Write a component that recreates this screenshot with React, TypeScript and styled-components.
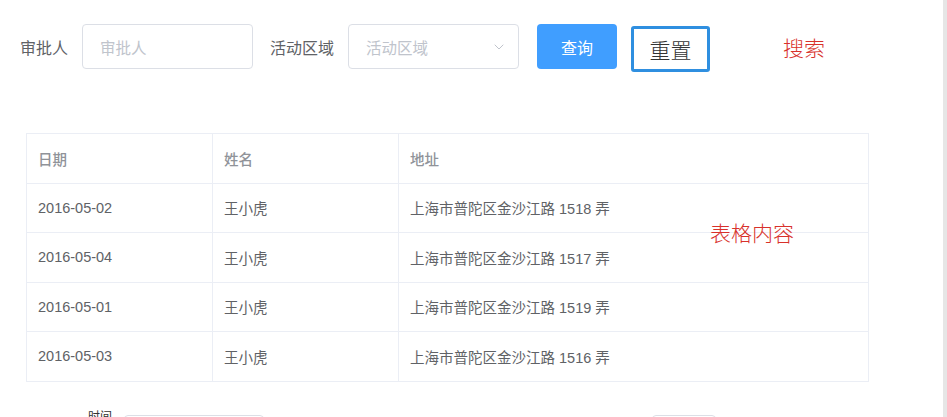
import React from "react";
import styled, { createGlobalStyle } from "styled-components";
import { ChevronDown } from "lucide-react";

const GlobalStyle = createGlobalStyle`
  html, body {
    margin: 0;
    padding: 0;
    background: #fff;
    overflow: hidden;
  }
  body {
    font-family: "Liberation Sans", "Noto Sans CJK SC", sans-serif;
  }
`;

const Page = styled.div`
  display: flex;
  width: 947px;
  height: 417px;
  overflow: hidden;
`;

const Main = styled.div`
  flex: 1;
  display: flex;
  flex-direction: column;
`;

const Gutter = styled.div`
  width: 4px;
  background: #e6e6e6;
`;

const Toolbar = styled.div`
  display: flex;
  align-items: center;
  padding: 24px 0 0 20px;
  height: 45px;
`;

const Label = styled.label`
  font-size: 16px;
  color: #606266;
  margin-right: 14px;
  white-space: nowrap;
`;

const Field = styled.div<{ $width: number; $gap: number }>`
  position: relative;
  display: flex;
  align-items: center;
  box-sizing: border-box;
  width: ${(p) => p.$width}px;
  height: 45px;
  border: 1px solid #dcdfe6;
  border-radius: 4px;
  padding: 0 17px;
  margin-right: ${(p) => p.$gap}px;
  color: #c0c4cc;
  font-size: 15.5px;
`;

const Placeholder = styled.span`
  flex: 1;
  color: #c0c4cc;
`;

const Arrow = styled.span`
  display: flex;
  color: #c0c4cc;
  margin-right: -6px;
`;

const PrimaryButton = styled.button`
  width: 80px;
  height: 45px;
  border: none;
  border-radius: 4px;
  background: #409eff;
  color: #fff;
  font-family: "Liberation Sans", "Noto Sans CJK SC", sans-serif;
  font-size: 16px;
  margin-right: 14px;
  padding: 0;
`;

const PlainButton = styled.button`
  width: 79px;
  height: 46px;
  margin-top: 4px;
  box-sizing: border-box;
  border: 3px solid #2f8fe0;
  border-radius: 3px;
  background: #fff;
  color: #333;
  font-family: "Noto Sans CJK SC", sans-serif;
  font-weight: 300;
  font-size: 21px;
  padding: 0;
`;

const Note = styled.span`
  color: #d8312b;
  font-family: "Noto Sans CJK SC", sans-serif;
  font-weight: 300;
  font-size: 21px;
  white-space: nowrap;
`;

const SearchNote = styled(Note)`
  margin-left: 73px;
`;

const TableWrap = styled.div`
  position: relative;
  margin: 64px 0 0 26px;
  width: 843px;
`;

const TableNote = styled(Note)`
  position: absolute;
  left: 684px;
  top: 84px;
`;

const Table = styled.table`
  width: 100%;
  border-collapse: collapse;
  table-layout: fixed;
  border: 1px solid #f0f1f4;
`;

const HeadCell = styled.th<{ $width?: number }>`
  width: ${(p) => (p.$width ? `${p.$width}px` : "auto")};
  height: 48.5px;
  padding: 0 0 0 11px;
  text-align: left;
  font-size: 14.5px;
  font-weight: 500;
  color: #909399;
  border: 1px solid #ebeef5;
`;

const Cell = styled.td`
  height: 48.5px;
  padding: 0 0 0 11px;
  font-size: 14.5px;
  color: #606266;
  border: 1px solid #ebeef5;
  white-space: nowrap;
`;

const NextRow = styled.div`
  display: flex;
  align-items: flex-start;
  margin-top: 26px;
  padding-left: 88px;
`;

const NextLabel = styled.span`
  font-size: 12px;
  color: #333;
  margin-top: 3px;
  margin-right: 12px;
  line-height: 12px;
`;

const NextBox = styled.div<{ $width: number; $gap: number }>`
  width: ${(p) => p.$width}px;
  height: 40px;
  margin-top: 7px;
  margin-right: ${(p) => p.$gap}px;
  border: 1px solid #dcdfe6;
  border-radius: 4px;
`;

const rows = [
  { date: "2016-05-02", name: "王小虎", address: "上海市普陀区金沙江路 1518 弄" },
  { date: "2016-05-04", name: "王小虎", address: "上海市普陀区金沙江路 1517 弄" },
  { date: "2016-05-01", name: "王小虎", address: "上海市普陀区金沙江路 1519 弄" },
  { date: "2016-05-03", name: "王小虎", address: "上海市普陀区金沙江路 1516 弄" },
];

export default function App() {
  return (
    <>
      <GlobalStyle />
      <Page>
        <Main>
          <Toolbar>
            <Label>审批人</Label>
            <Field $width={171} $gap={17}>
              <Placeholder>审批人</Placeholder>
            </Field>
            <Label>活动区域</Label>
            <Field $width={171} $gap={18}>
              <Placeholder>活动区域</Placeholder>
              <Arrow>
                <ChevronDown size={16} strokeWidth={1.5} />
              </Arrow>
            </Field>
            <PrimaryButton>查询</PrimaryButton>
            <PlainButton>重置</PlainButton>
            <SearchNote>搜索</SearchNote>
          </Toolbar>

          <TableWrap>
            <Table>
              <thead>
                <tr>
                  <HeadCell $width={174}>日期</HeadCell>
                  <HeadCell $width={174}>姓名</HeadCell>
                  <HeadCell>地址</HeadCell>
                </tr>
              </thead>
              <tbody>
                {rows.map((r) => (
                  <tr key={r.date}>
                    <Cell>{r.date}</Cell>
                    <Cell>{r.name}</Cell>
                    <Cell>{r.address}</Cell>
                  </tr>
                ))}
              </tbody>
            </Table>
            <TableNote>表格内容</TableNote>
          </TableWrap>

          <NextRow>
            <NextLabel>时间</NextLabel>
            <NextBox $width={138} $gap={388} />
            <NextBox $width={62} $gap={0} />
          </NextRow>
        </Main>
        <Gutter />
      </Page>
    </>
  );
}
